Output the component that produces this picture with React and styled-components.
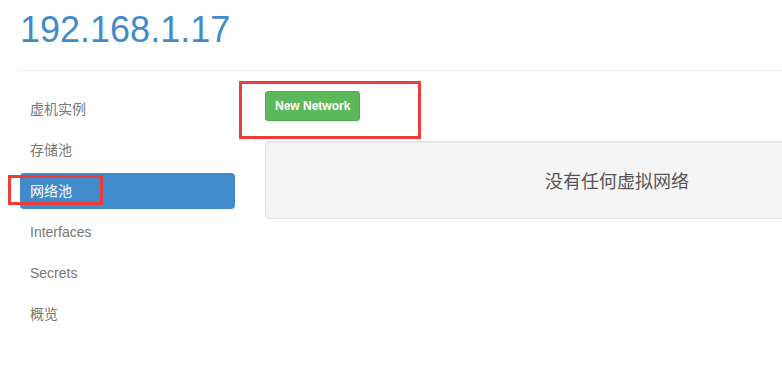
import React from "react";
import styled, { createGlobalStyle } from "styled-components";

const GlobalStyle = createGlobalStyle`
  html, body {
    margin: 0;
    padding: 0;
    background: #fff;
    overflow: hidden;
  }
  body {
    font-family: "Liberation Sans", Arial, "Noto Sans CJK SC", sans-serif;
    font-size: 14px;
    color: #333;
  }
`;

const Page = styled.div`
  position: relative;
  width: 1000px;
  padding: 10px 0 0 20px;
`;

const Title = styled.h1`
  margin: 0;
  font-size: 36px;
  line-height: 40px;
  font-weight: 400;
  color: #428bca;
`;

const Divider = styled.hr`
  margin: 20px 0;
  border: 0;
  border-top: 1px solid #eee;
`;

const Body = styled.div`
  display: grid;
  grid-template-columns: 215px 704px;
  column-gap: 30px;
`;

const Nav = styled.ul`
  list-style: none;
  margin: 0;
  padding: 0;
  display: flex;
  flex-direction: column;
  gap: 5px;
`;

const NavItem = styled.li`
  height: 36px;
  line-height: 36px;
  padding: 0 10px;
  border-radius: 4px;
  font-size: 14px;
  color: ${(p) => (p.$active ? "#fff" : "#777")};
  background: ${(p) => (p.$active ? "#428bca" : "transparent")};
`;

const Main = styled.div`
  display: flex;
  flex-direction: column;
  align-items: flex-start;
`;

const Button = styled.button`
  height: 30px;
  padding: 0 9px;
  border: 1px solid #4cae4c;
  border-radius: 3px;
  background: #5cb85c;
  color: #fff;
  font-family: "Liberation Sans", Arial, sans-serif;
  font-size: 12px;
  font-weight: 700;
  line-height: 28px;
  cursor: pointer;
`;

const Well = styled.div`
  align-self: stretch;
  margin-top: 20px;
  height: 78px;
  box-sizing: border-box;
  border: 1px solid #e3e3e3;
  border-radius: 4px;
  background: #f5f5f5;
  box-shadow: inset 0 1px 1px rgba(0, 0, 0, 0.05);
  display: flex;
  align-items: center;
  justify-content: center;
  font-size: 18px;
  color: #555;
`;

const Mark = styled.div`
  position: absolute;
  top: ${(p) => p.$top}px;
  left: ${(p) => p.$left}px;
  width: ${(p) => p.$width}px;
  height: ${(p) => p.$height}px;
  box-sizing: border-box;
  border: 3px solid #f03b3b;
  pointer-events: none;
`;

const items = ["虚机实例", "存储池", "网络池", "Interfaces", "Secrets", "概览"];

export default function App() {
  return (
    <>
      <GlobalStyle />
      <Page>
        <Title>192.168.1.17</Title>
        <Divider />
        <Body>
          <Nav>
            {items.map((name) => (
              <NavItem key={name} $active={name === "网络池"}>
                {name}
              </NavItem>
            ))}
          </Nav>
          <Main>
            <Button>New Network</Button>
            <Well>没有任何虚拟网络</Well>
          </Main>
        </Body>
        <Mark $top={175} $left={8} $width={95} $height={30} />
        <Mark $top={81} $left={239} $width={182} $height={58} />
      </Page>
    </>
  );
}
